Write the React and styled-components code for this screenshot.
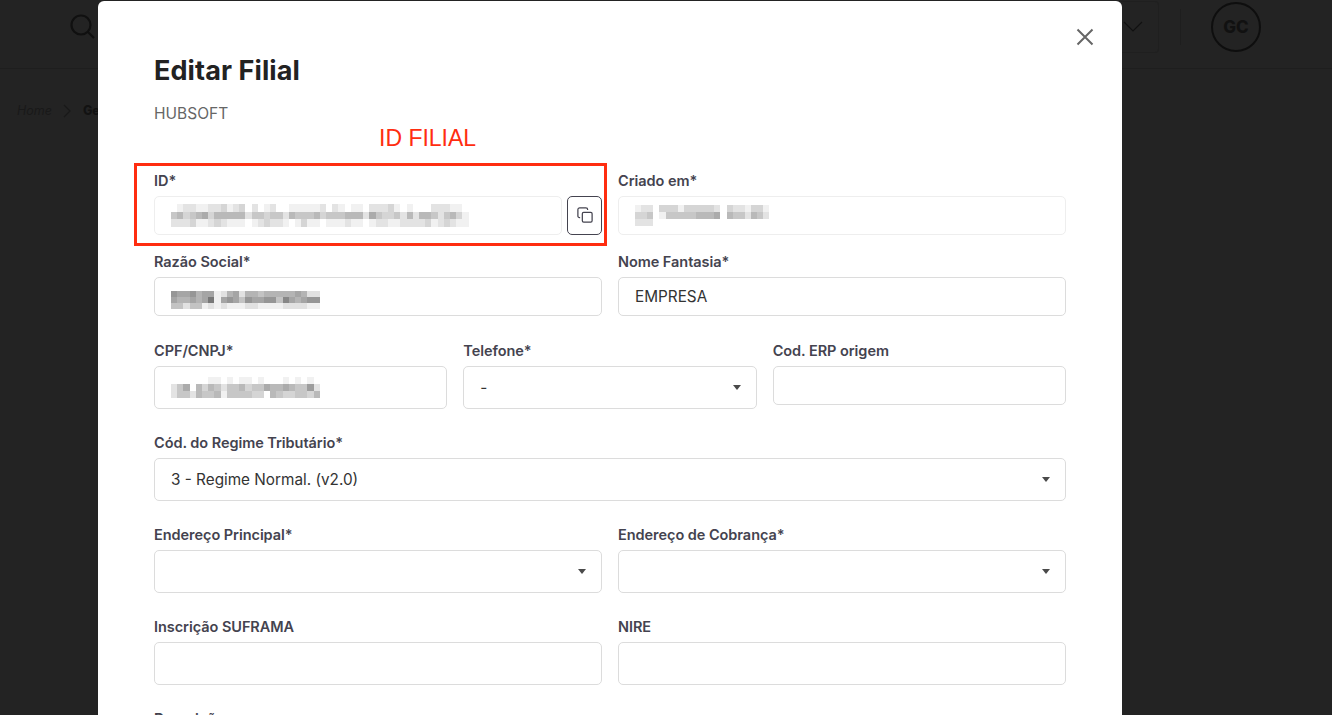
import React from 'react'
import styled, { createGlobalStyle } from 'styled-components'

const Global = createGlobalStyle`
html, body {
  margin: 0;
  height: 100%;
  overflow: hidden;
  background: #232323;
  font-family: Inter, "Open Sans", "Liberation Sans", sans-serif;
}
* { box-sizing: border-box; }
`

const Page = styled.div`
height: 715px;
overflow: hidden;
background: #232323;
color: #101010;
`

const Header = styled.header`
height: 69px;
display: flex;
align-items: center;
padding: 0 71px 14px 70px;
border-bottom: 1px solid #1e1e1e;
`

const HeaderRight = styled.div`
margin-left: auto;
display: flex;
align-items: center;
`

const ChevronBox = styled.div`
width: 52px;
height: 52px;
margin-right: 21px;
display: flex;
align-items: center;
justify-content: center;
border: 1px solid #1f1f1f;
border-left: none;
border-radius: 4px;
color: #111;
`

const Divider = styled.div`
width: 1px;
height: 36px;
margin-right: 30px;
background: #1e1e1e;
`

const Avatar = styled.div`
width: 50px;
height: 50px;
display: flex;
align-items: center;
justify-content: center;
border: 2px solid #0e0e0e;
border-radius: 50%;
font-size: 17px;
font-weight: 800;
color: #111;
`

const Breadcrumb = styled.nav`
display: flex;
align-items: center;
gap: 11px;
padding: 34px 0 0 17px;
font-size: 12.5px;
color: #191919;
`

const Crumb = styled.span`
font-style: ${props => props.current ? 'normal' : 'italic'};
font-weight: ${props => props.current ? 800 : 400};
color: ${props => props.current ? '#121212' : 'inherit'};
`

const Overlay = styled.div`
position: fixed;
inset: 0;
overflow: hidden;
`

const Modal = styled.section`
position: relative;
width: 1024px;
min-height: 800px;
margin: 1px 0 0 98px;
padding: 53px 56px 0;
background: #fff;
border-radius: 6px 6px 0 0;
`

const CloseButton = styled.button`
position: absolute;
top: 25px;
right: 26px;
width: 22px;
height: 22px;
padding: 0;
display: flex;
align-items: center;
justify-content: center;
border: none;
background: none;
color: #666;
`

const Title = styled.h1`
margin: 0;
font-size: 27px;
line-height: 34px;
font-weight: 700;
letter-spacing: 0.1px;
color: #222;
`

const Subtitle = styled.p`
margin: 16px 0 0;
font-size: 15.5px;
line-height: 20px;
color: #666;
`

const Note = styled.span`
position: absolute;
top: 124px;
left: 281px;
font-family: "Liberation Sans", Arial, sans-serif;
font-size: 23px;
line-height: 26px;
color: #ff2d10;
`

const Highlight = styled.div`
position: absolute;
top: 162px;
left: 36px;
width: 473px;
height: 83px;
border: 3px solid #ff2d10;
pointer-events: none;
`

const Form = styled.form`
margin-top: 48px;
display: flex;
flex-direction: column;
`

const Row = styled.div`
display: grid;
grid-template-columns: repeat(${props => props.cols || 2}, 1fr);
column-gap: 16px;
align-items: start;
margin-top: ${props => props.gap ?? 25}px;
`

const Field = styled.div`
display: flex;
flex-direction: column;
min-width: 0;
`

const Label = styled.label`
display: block;
margin-bottom: 6px;
font-size: 14.5px;
line-height: 18px;
font-weight: 600;
letter-spacing: -0.05px;
color: #44434f;
`

const Control = styled.div`
display: flex;
align-items: center;
width: 100%;
height: ${props => props.h || 43}px;
padding: 0 15px 0 16px;
border: 1px solid ${props => props.disabled ? '#eeeeee' : '#dcdcdc'};
border-radius: 5px;
background: #fff;
font-size: 15.3px;
color: #333;
`

const Caret = styled.span`
margin-left: auto;
width: 0;
height: 0;
border-left: 4.5px solid transparent;
border-right: 4.5px solid transparent;
border-top: 5px solid #4a4a4a;
`

const InputGroup = styled.div`
display: flex;
gap: 5px;
`

const CopyButton = styled.button`
flex: 0 0 35px;
height: 39px;
padding: 0 0 2px;
display: flex;
align-items: center;
justify-content: center;
border: 1px solid #44434f;
border-radius: 5px;
background: #fff;
color: #44434f;
`

// redacted text in the screenshot: each digit is how dark one block of the mosaic is
const redacted = {
  id: [
    '012211223123020120011111' + '202101102223101000222110',
    '453456355555244344254445' + '344455526433425255424531',
    '222311232111012322101311' + '011121101221122223123211',
  ],
  created: [
    '1220333133333203221331',
    '3340144444555605442542',
    '2220000000000000000000',
  ],
  company: [
    '000000000000000000000000',
    '766756612562554555556522',
    '655656916764766774865677',
    '442441212111221111222211',
  ],
  document: [
    '000000110101101000101010',
    '246053542445344655654472',
    '244254451444433054334435',
  ],
}

function Mosaic({ rows, w = 6.2, h = 7, strength = 14 }) {
  const cols = rows[0].length
  return (
    <svg width={cols * w} height={rows.length * h} shapeRendering="crispEdges">
      {rows.map((row, r) => row.split('').map((d, c) => {
        const g = 255 - Number(d) * strength
        return <rect key={r + '-' + c} x={c * w} y={r * h} width={w} height={h} fill={`rgb(${g},${g},${g})`} />
      }))}
    </svg>
  )
}

function App() {
  return (
    <>
      <Global />
      <Page>
        <Header>
          <svg width="26" height="28" viewBox="0 0 26 28" fill="none" stroke="currentColor" strokeWidth="2.2">
            <circle cx="11" cy="12" r="9.5" />
            <path d="M18 19l6 6" />
          </svg>
          <HeaderRight>
            <ChevronBox>
              <svg width="20" height="12" viewBox="0 0 20 12" fill="none" stroke="currentColor" strokeWidth="1.2">
                <path d="M1 1l9 9 9-9" />
              </svg>
            </ChevronBox>
            <Divider />
            <Avatar>GC</Avatar>
          </HeaderRight>
        </Header>
        <Breadcrumb>
          <Crumb>Home</Crumb>
          <svg width="9" height="14" viewBox="0 0 9 14" fill="none" stroke="currentColor" strokeWidth="1.2">
            <path d="M1 1l6 6-6 6" />
          </svg>
          <Crumb current>Gerenciar</Crumb>
        </Breadcrumb>
      </Page>

      <Overlay>
        <Modal>
          <CloseButton aria-label="Fechar">
            <svg width="18" height="18" viewBox="0 0 18 18" fill="none" stroke="currentColor" strokeWidth="2">
              <path d="M1.5 1.5l15 15M16.5 1.5l-15 15" />
            </svg>
          </CloseButton>
          <Title>Editar Filial</Title>
          <Subtitle>HUBSOFT</Subtitle>
          <Note>ID FILIAL</Note>
          <Highlight />
          <Form>
            <Row gap={0}>
              <Field>
                <Label>ID*</Label>
                <InputGroup>
                  <Control h={39} disabled><Mosaic rows={redacted.id} h={7.67} /></Control>
                  <CopyButton type="button" aria-label="Copiar">
                    <svg width="16" height="16" viewBox="0 0 18 18" fill="none" stroke="currentColor" strokeWidth="1.4">
                      <rect x="6" y="6" width="11" height="11" rx="1.5" />
                      <path d="M3.5 12H3a2 2 0 0 1-2-2V3a2 2 0 0 1 2-2h7a2 2 0 0 1 2 2v.5" />
                    </svg>
                  </CopyButton>
                </InputGroup>
              </Field>
              <Field>
                <Label>Criado em*</Label>
                <Control h={39} disabled><Mosaic rows={redacted.created} w={6.1} /></Control>
              </Field>
            </Row>
            <Row gap={18}>
              <Field>
                <Label>Razão Social*</Label>
                <Control h={39}><Mosaic rows={redacted.company} h={6} strength={15} /></Control>
              </Field>
              <Field>
                <Label>Nome Fantasia*</Label>
                <Control h={39}>EMPRESA</Control>
              </Field>
            </Row>
            <Row cols={3} gap={26}>
              <Field>
                <Label>CPF/CNPJ*</Label>
                <Control><Mosaic rows={redacted.document} /></Control>
              </Field>
              <Field>
                <Label>Telefone*</Label>
                <Control>-<Caret /></Control>
              </Field>
              <Field>
                <Label>Cod. ERP origem</Label>
                <Control h={39} />
              </Field>
            </Row>
            <Row cols={1}>
              <Field>
                <Label>Cód. do Regime Tributário*</Label>
                <Control>3 - Regime Normal. (v2.0)<Caret /></Control>
              </Field>
            </Row>
            <Row>
              <Field>
                <Label>Endereço Principal*</Label>
                <Control><Caret /></Control>
              </Field>
              <Field>
                <Label>Endereço de Cobrança*</Label>
                <Control><Caret /></Control>
              </Field>
            </Row>
            <Row>
              <Field>
                <Label>Inscrição SUFRAMA</Label>
                <Control />
              </Field>
              <Field>
                <Label>NIRE</Label>
                <Control />
              </Field>
            </Row>
            <Row cols={1}>
              <Field>
                <Label>Descrição</Label>
                <Control />
              </Field>
            </Row>
          </Form>
        </Modal>
      </Overlay>
    </>
  )
}

export default App
